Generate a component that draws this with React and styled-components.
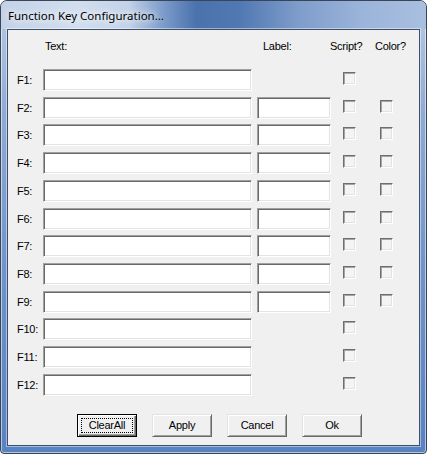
import React from "react";
import styled, { createGlobalStyle } from "styled-components";

const GlobalStyle = createGlobalStyle`
  html, body { margin: 0; padding: 0; background: #ffffff; }
  body { font-family: "Liberation Sans", Arial, sans-serif; }
  * { box-sizing: border-box; }
`;

const Window = styled.div`
  width: 427px;
  height: 454px;
  border: 1px solid #3a4658;
  border-radius: 7px 7px 4px 4px;
  background: linear-gradient(180deg, #b9cbe4 0%, #8eabd5 25%, #6f93ca 60%, #5882c2 100%);
  box-shadow: inset 0 0 0 1px rgba(255, 255, 255, 0.55);
  display: flex;
  flex-direction: column;
  padding: 0 6px 7px 6px;
  overflow: hidden;
`;

const TitleBar = styled.div`
  height: 28px;
  margin: 0 -6px;
  padding-left: 7px;
  display: flex;
  align-items: center;
  border-radius: 6px 6px 0 0;
  background: linear-gradient(
    90deg,
    #c3d2e7 0%,
    #d2deee 18%,
    #c2d2e8 30%,
    #7d9dcb 38%,
    #4a72ad 46%,
    #5078b2 56%,
    #7e9dcb 70%,
    #9bb4da 85%,
    #a9bfe0 100%
  );
`;

const TitleText = styled.span`
  font-family: "Noto Sans", "Open Sans", sans-serif;
  font-size: 11.5px;
  color: #000;
  text-shadow: 0 0 6px #ffffff, 0 0 10px #ffffff;
`;

const Client = styled.div`
  flex: 1;
  background: #f0f0f0;
  border: 1px solid #3e4f68;
  box-shadow: 0 0 0 1px rgba(255, 255, 255, 0.45);
  padding-top: 10px;
  display: flex;
  flex-direction: column;
  font-size: 11px;
  letter-spacing: -0.25px;
  color: #000;
`;

const HeaderRow = styled.div`
  display: flex;
  height: 13px;
  line-height: 13px;
  padding-left: 37px;
  margin-bottom: 16px;
`;

const HeaderCell = styled.span`
  width: ${(p) => p.$w}px;
  flex: none;
`;

const KeyGrid = styled.div`
  display: grid;
  grid-template-columns: 35px 214px 86px 37px 13px;
  grid-auto-rows: 22px;
  row-gap: 5.73px;
  align-items: start;
`;

const KeyLabel = styled.span`
  padding-left: 9px;
  line-height: 22px;
  grid-column: 1;
`;

const TextBox = styled.div`
  width: ${(p) => p.$w}px;
  height: 22px;
  background: #ffffff;
  border-style: solid;
  border-width: 1px;
  border-color: #a0a0a0 #ffffff #ffffff #a0a0a0;
  box-shadow: inset 1px 1px 0 #696969, inset -1px -1px 0 #e3e3e3;
  grid-column: ${(p) => p.$col};
`;

const Check = styled.div`
  width: 13px;
  height: 13px;
  margin-top: 3px;
  background: #f4f4f4;
  border-style: solid;
  border-width: 1px;
  border-color: #6e6e6e #ffffff #ffffff #6e6e6e;
  box-shadow: inset 1px 1px 0 #a5a5a5, inset -1px -1px 0 #e3e3e3;
  grid-column: ${(p) => p.$col};
`;

const ButtonRow = styled.div`
  display: flex;
  gap: 15px;
  padding-left: 69px;
  margin-top: 18px;
`;

const Button = styled.div`
  position: relative;
  width: 60px;
  height: 23px;
  display: flex;
  align-items: center;
  justify-content: center;
  background: #f0f0f0;
  font-size: 11px;
  border-style: solid;
  border-width: 1px;
  border-color: ${(p) => (p.$default ? "#000000" : "#e3e3e3 #696969 #696969 #e3e3e3")};
  box-shadow: ${(p) =>
    p.$default
      ? "inset 1px 1px 0 #ffffff, inset -1px -1px 0 #696969, inset -2px -2px 0 #a0a0a0"
      : "inset 1px 1px 0 #ffffff, inset -1px -1px 0 #a0a0a0"};
`;

const FocusRing = styled.span`
  position: absolute;
  inset: 3px 3px 3px 3px;
  border: 1px dotted #000;
  pointer-events: none;
`;

const rows = [
  { key: "F1", label: false, color: false },
  { key: "F2", label: true, color: true },
  { key: "F3", label: true, color: true },
  { key: "F4", label: true, color: true },
  { key: "F5", label: true, color: true },
  { key: "F6", label: true, color: true },
  { key: "F7", label: true, color: true },
  { key: "F8", label: true, color: true },
  { key: "F9", label: true, color: true },
  { key: "F10", label: false, color: false },
  { key: "F11", label: false, color: false },
  { key: "F12", label: false, color: false },
];

export default function App() {
  return (
    <>
      <GlobalStyle />
      <Window>
        <TitleBar>
          <TitleText>Function Key Configuration...</TitleText>
        </TitleBar>
        <Client>
          <HeaderRow>
            <HeaderCell $w={218}>Text:</HeaderCell>
            <HeaderCell $w={67}>Label:</HeaderCell>
            <HeaderCell $w={45}>Script?</HeaderCell>
            <HeaderCell $w={40}>Color?</HeaderCell>
          </HeaderRow>
          <KeyGrid>
            {rows.map((r) => (
              <React.Fragment key={r.key}>
                <KeyLabel>{r.key}:</KeyLabel>
                <TextBox $w={209} $col={2} />
                {r.label && <TextBox $w={74} $col={3} />}
                <Check $col={4} />
                {r.color && <Check $col={5} />}
              </React.Fragment>
            ))}
          </KeyGrid>
          <ButtonRow>
            <Button $default>
              ClearAll
              <FocusRing />
            </Button>
            <Button>Apply</Button>
            <Button>Cancel</Button>
            <Button>Ok</Button>
          </ButtonRow>
        </Client>
      </Window>
    </>
  );
}
